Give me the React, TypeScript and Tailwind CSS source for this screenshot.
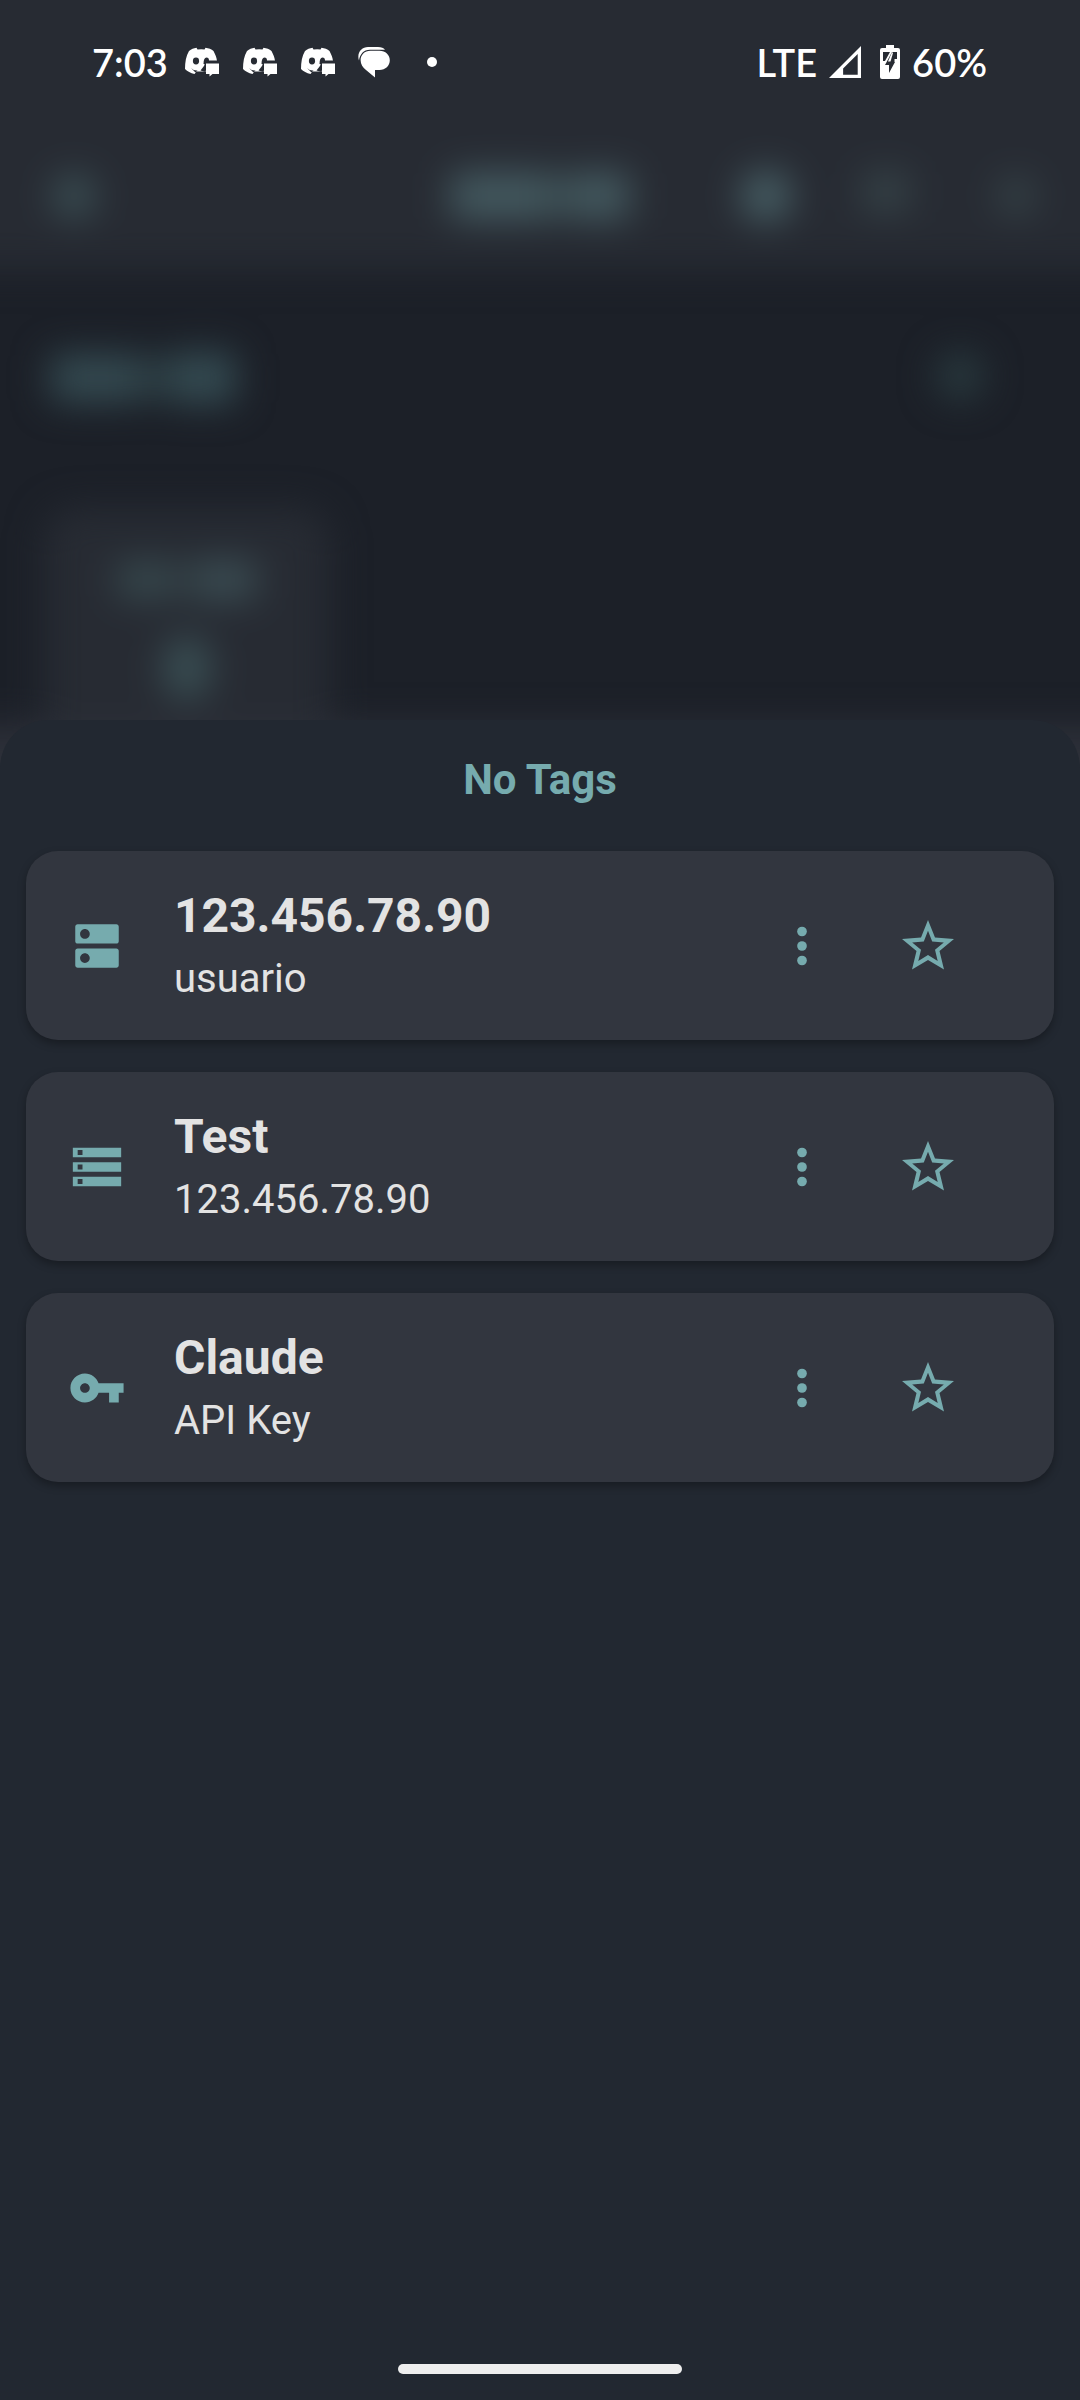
import React from "react";

type IconProps = { className?: string };

const DiscordIcon = () => (
  <svg viewBox="0 0 35 32" className="h-8 w-9" fill="#fff" aria-hidden="true">
    <path d="M4.500 5C7 3 9 2.200 12 1.700L13 3.500Q17 3 20 3.500L21 1.700C24 2.200 27 3 29 5C31 9 32 11 32.500 15L20 17V24L22 25.500H12L10 28C6 27 3 25.500 0.500 23C0.500 16 1.500 10 4.500 5Z" />
    <path d="M6.500 22Q9.500 25 13 24.500L11 26.500Z" fill="#272b33" />
    <ellipse cx="11.500" cy="15" rx="3.100" ry="3.400" fill="#272b33" />
    <path d="M19 18Q19 11.500 22 11.500Q24.500 11.500 24.500 14.500H35V18Z" fill="#272b33" />
    <path d="M16 24.500L21 18V26Z" fill="#272b33" />
    <path d="M21.500 17.500H34.500V28H28L25 30.500V28H21.500Z" />
  </svg>
);

const ChatIcon = () => (
  <svg viewBox="0 0 32 32" className="size-8" fill="#fff" aria-hidden="true">
    <path d="M1 14.500C-1.500 7 3.500 1 10 1H20C23.500 1 25.500 2 27 3.800H12C5.500 3.800 1.800 8.500 1 14.500Z" />
    <path d="M12.500 4.800H21.500C27.500 4.800 31.800 9 31.800 14.200C31.800 19.500 27.500 24 21.500 24H17V31.500L8 24C4.800 21.500 2.600 18 2.600 14.200C2.600 9 6.500 4.800 12.500 4.800Z" />
  </svg>
);

const SignalIcon = () => (
  <svg viewBox="0 0 34 34" className="size-8" aria-hidden="true">
    <path d="M0 34L34 0V34ZM15 30.500H30.500V8.500L15 24Z" fill="#fff" fillRule="evenodd" />
  </svg>
);

const BatteryIcon = () => (
  <svg viewBox="0 0 20 34" className="h-[34px] w-5" aria-hidden="true">
    <path d="M6 0H14V3H18Q20 3 20 5V32Q20 34 18 34H2Q0 34 0 32V5Q0 3 2 3H6Z" fill="#fff" />
    <path d="M3 7H10L5 16H3Z M13 7H17V14H14.500V17H15L9 28V20H5L12 7Z" fill="#272b33" />
    <path d="M12 7L8 16.500H10.500L13 8Z" fill="#fff" />
  </svg>
);

const DnsIcon = ({ className }: IconProps) => (
  <svg viewBox="0 0 24 24" className={className} fill="currentColor" aria-hidden="true">
    <path d="M20 13H4c-.55 0-1 .45-1 1v6c0 .55.45 1 1 1h16c.55 0 1-.45 1-1v-6c0-.55-.45-1-1-1zM7 19c-1.100 0-2-.9-2-2s.9-2 2-2 2 .9 2 2-.9 2-2 2zM20 3H4c-.55 0-1 .45-1 1v6c0 .55.45 1 1 1h16c.55 0 1-.45 1-1V4c0-.55-.45-1-1-1zM7 9c-1.100 0-2-.9-2-2s.9-2 2-2 2 .9 2 2-.9 2-2 2z" />
  </svg>
);

const StorageIcon = ({ className }: IconProps) => (
  <svg viewBox="0 0 24 24" className={className} fill="currentColor" aria-hidden="true">
    <path d="M2 20h20v-4H2v4zm2-3h2v2H4v-2zM2 4v4h20V4H2zm4 3H4V5h2v2zm-4 7h20v-4H2v4zm2-3h2v2H4v-2z" />
  </svg>
);

const KeyIcon = ({ className }: IconProps) => (
  <svg viewBox="0 0 24 24" className={className} fill="currentColor" aria-hidden="true">
    <path d="M12.650 10C11.830 7.670 9.610 6 7 6c-3.310 0-6 2.690-6 6s2.690 6 6 6c2.610 0 4.830-1.670 5.650-4H17v4h4v-4h2v-4H12.650zM7 14c-1.100 0-2-.9-2-2s.9-2 2-2 2 .9 2 2-.9 2-2 2z" />
  </svg>
);

const MoreIcon = ({ className }: IconProps) => (
  <svg viewBox="0 0 24 24" className={className} fill="currentColor" aria-hidden="true">
    <circle cx="12" cy="6" r="2" />
    <circle cx="12" cy="12" r="2" />
    <circle cx="12" cy="18" r="2" />
  </svg>
);

const StarIcon = ({ className }: IconProps) => (
  <svg viewBox="-5 -5 62 62" className={className} fill="currentColor" aria-hidden="true">
    <path
      fillRule="evenodd"
      d="M26 0L33 17.500L52 19L37.500 31L42 49.500L26 40L10 49.500L14.500 31L0 19L19 17.500ZM26 10.800L21.800 21.500L10.200 22.500L19 29.700L16.300 41L26 35L35.700 41L33 29.700L41.800 22.500L30.200 21.500Z"
    />
  </svg>
);

const entries = [
  { title: "123.456.78.90", subtitle: "usuario", Icon: DnsIcon },
  { title: "Test", subtitle: "123.456.78.90", Icon: StorageIcon },
  { title: "Claude", subtitle: "API Key", Icon: KeyIcon },
];

function StatusBar() {
  return (
    <div className="relative z-10 flex h-31 items-center justify-between pr-[93px] pl-[92px] font-['Lato',sans-serif] text-[38px] leading-10 font-semibold text-white">
      <div className="flex items-center">
        <span className="w-[92px]">7:03</span>
        <div className="flex items-center gap-[22px]">
          <DiscordIcon />
          <DiscordIcon />
          <DiscordIcon />
          <ChatIcon />
        </div>
        <span className="ml-[37px] size-[10px] rounded-full bg-white" />
      </div>
      <div className="flex items-center">
        <span className="mr-3">LTE</span>
        <SignalIcon />
        <span className="mr-3 ml-[19px]">
          <BatteryIcon />
        </span>
        <span>60%</span>
      </div>
    </div>
  );
}

/* The page behind the sheet, shown out of focus. */
function Backdrop() {
  return (
    <div className="absolute inset-x-0 top-0 h-[800px] overflow-hidden bg-[#1c2028]" aria-hidden="true">
      <div className="-mx-20 -mt-20 px-20 pt-20 blur-[18px]">
        <div className="-mx-20 -mt-20 flex h-[350px] items-end bg-[#272b33] px-20 pb-[52px]">
          <div className="flex h-11 w-full items-center pl-[52px]">
            <div className="size-11 rounded-full bg-[#3b5055]" />
            <div className="ml-[354px] h-12 w-[100px] rounded-lg bg-[#43595f]" />
            <div className="h-11 w-5 bg-[#3a4b50]" />
            <div className="h-12 w-[60px] rounded-lg bg-[#43595f]" />
            <div className="ml-[110px] size-13 rounded-full bg-[#475f65]" />
            <div className="mb-2 ml-[70px] h-10 w-12 rounded-lg bg-[#354247]" />
            <div className="mr-[44px] ml-auto size-10 rounded-full bg-[#354247]" />
          </div>
        </div>
        <div className="flex h-[238px] items-start justify-between pt-[82px] pr-[96px] pl-[50px]">
          <div className="flex items-center">
            <div className="h-12 w-[90px] rounded-lg bg-[#344a51]" />
            <div className="h-11 w-8 bg-[#2b3b41]" />
            <div className="h-13 w-16 rounded-lg bg-[#344b52]" />
          </div>
          <div className="size-12 rounded-full bg-[#293a3f]" />
        </div>
        <div className="ml-[44px] flex h-[252px] w-[286px] flex-col items-center rounded-[32px] bg-[#272b33] pt-[52px]">
          <div className="flex items-center">
            <div className="h-9 w-14 rounded-lg bg-[#37494e]" />
            <div className="h-7 w-5 bg-[#303c41]" />
            <div className="h-10 w-16 rounded-lg bg-[#3a4c52]" />
          </div>
          <div className="mt-9 h-16 w-12 rounded-full bg-[#394e53]" />
        </div>
        <div className="-mx-20 -mt-[34px] h-40 bg-[#2d3039]" />
      </div>
    </div>
  );
}

export default function App() {
  return (
    <div className="relative flex min-h-screen flex-col bg-[#222831] font-['Roboto',sans-serif]">
      <Backdrop />
      <StatusBar />
      <main className="relative mt-[596px] flex flex-1 flex-col rounded-t-[48px] bg-[#222831] px-[26px]">
        <h1 className="pt-9 text-center text-[42px] leading-12 font-bold text-[#76abae]">No Tags</h1>
        <ul className="mt-[47px] flex flex-col gap-8">
          {entries.map(({ title, subtitle, Icon }) => (
            <li
              key={title}
              className="flex h-[189px] items-center rounded-[32px] bg-[#32363f] pr-[95px] pl-[42px] text-[#e3e3e3] shadow-[0_4px_8px_rgba(0,0,0,0.3)]"
            >
              <Icon className="size-[58px] shrink-0 text-[#76abae]" />
              <div className="ml-12 min-w-0 flex-1 pt-0.5">
                <h2 className="text-[48px] leading-16 font-bold">{title}</h2>
                <p className="text-[40px] leading-[62px]">{subtitle}</p>
              </div>
              <button type="button" aria-label={`Options for ${title}`} className="text-[#76abae]">
                <MoreIcon className="size-[58px]" />
              </button>
              <button type="button" aria-label={`Add ${title} to favorites`} className="ml-[66px] text-[#76abae]">
                <StarIcon className="size-[62px]" />
              </button>
            </li>
          ))}
        </ul>
        <div className="mt-auto mb-[26px] h-[10px] w-[284px] self-center rounded-full bg-[#eeeeee]" />
      </main>
    </div>
  );
}
